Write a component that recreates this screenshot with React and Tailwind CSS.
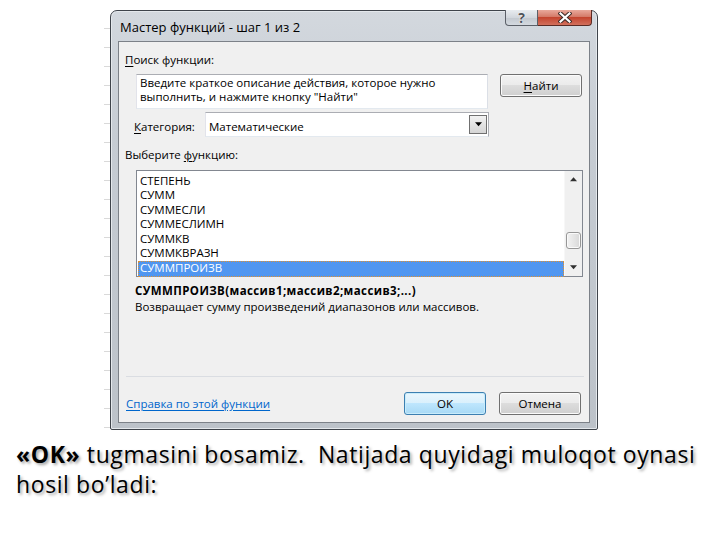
import React from 'react';

const FUNCS = ['СТЕПЕНЬ', 'СУММ', 'СУММЕСЛИ', 'СУММЕСЛИМН', 'СУММКВ', 'СУММКВРАЗН', 'СУММПРОИЗВ'];

function Arrow({ dir = 'down', size = 7, color = '#000' }) {
  return (
    <svg width={size} height={Math.ceil(size / 2) + 1} viewBox="0 0 8 5">
      {dir === 'down' ? <polygon points="0,0 8,0 4,4.5" fill={color} /> : <polygon points="0,4.5 8,4.5 4,0" fill={color} />}
    </svg>
  );
}

function WinButton({ children, focused, className = '' }) {
  return (
    <div
      className={`h-[23px] w-[82px] flex items-center justify-center rounded-[3px] border text-[11.5px] text-black ${
        focused
          ? 'border-[#3c7fb1] bg-[linear-gradient(#eaf6fd_0%,#d9f0fc_49%,#bee6fd_50%,#a7d9f5_100%)] shadow-[inset_0_0_0_1px_#c8ecfb]'
          : 'border-[#707070] bg-[linear-gradient(#f2f2f2_0%,#ebebeb_49%,#dddddd_50%,#cfcfcf_100%)] shadow-[inset_0_0_0_1px_#fbfbfb]'
      } ${className}`}
    >
      {children}
    </div>
  );
}

function Dialog() {
  return (
    <div className="w-[488px] h-[420px] flex flex-col border border-[#3f444b] rounded-t-[7px] rounded-b-[2px] bg-[linear-gradient(#d3d8de,#c6ccd3_30%,#bcc2c9)] px-[7px] pb-[6px] shadow-[inset_0_0_0_1px_#e4e8ec]">
      {/* title bar */}
      <div className="h-[30px] flex items-start">
        <span className="ml-[2px] mt-[7px] text-[13px] leading-[18px] text-black">Мастер функций - шаг 1 из 2</span>
        <div className="ml-auto -mt-[1px] -mr-[2px] flex">
          <div className="w-[33px] h-[16px] rounded-bl-[4px] border border-t-0 border-[#5b6068] bg-[linear-gradient(#e8ecf0,#d2d7dd_50%,#c2c8cf_51%,#d4d9df)] flex items-center justify-center">
            <span className="text-[14px] leading-[14px] font-bold text-[#4e545b] [text-shadow:0_0_1px_#fff,0_0_1px_#fff]">?</span>
          </div>
          <div className="w-[54px] h-[16px] rounded-br-[4px] border border-t-0 border-l-0 border-[#5b2b24] bg-[linear-gradient(#e9a99b,#d47a68_45%,#c4452f_50%,#d2705c)] flex items-center justify-center">
            <svg width="14" height="11" viewBox="0 0 14 11">
              <path d="M2.5 1.5 L11.5 9.5 M11.5 1.5 L2.5 9.5" stroke="#3d2b28" strokeWidth="4.2" strokeLinecap="square" />
              <path d="M2.5 1.5 L11.5 9.5 M11.5 1.5 L2.5 9.5" stroke="#ffffff" strokeWidth="2.2" strokeLinecap="square" />
            </svg>
          </div>
        </div>
      </div>

      {/* client area */}
      <div className="flex-1 flex flex-col border border-[#7c8188] bg-[#f0f0f0] text-[11.5px] text-black">
        <div className="mt-[10px] ml-[6px] h-[16px] leading-[16px]">
          <span className="underline underline-offset-2">П</span>оиск функции:
        </div>

        <div className="mt-[6px] flex items-start">
          <div className="ml-[17px] w-[352px] h-[35px] bg-white border border-[#abadb3] border-l-[#e2e3ea] border-b-[#e3e9ef] border-r-[#dbdfe6] pl-[3px] pt-[1px] leading-[13.5px]">
            Введите краткое описание действия, которое нужно<br />
            выполнить, и нажмите кнопку "Найти"
          </div>
          <WinButton className="ml-[12px]">
            <span><span className="underline underline-offset-2">Н</span>айти</span>
          </WinButton>
        </div>

        <div className="mt-[3px] flex items-center">
          <div className="ml-[15px] w-[71px] pt-[4px]">
            <span className="underline underline-offset-2">К</span>атегория:
          </div>
          <div className="w-[284px] h-[25px] bg-white border border-[#abadb3] border-l-[#e2e3ea] border-b-[#e3e9ef] flex items-center">
            <span className="pl-[3px] pt-[4px] flex-1">Математические</span>
            <div className="mr-[1px] w-[18px] h-[19px] border border-[#707070] bg-[linear-gradient(#f2f2f2,#e3e3e3_50%,#d5d5d5)] flex items-center justify-center">
              <Arrow />
            </div>
          </div>
        </div>

        <div className="mt-[10px] ml-[6px] h-[16px] leading-[16px]">
          Выберите <span className="underline underline-offset-2">ф</span>ункцию:
        </div>

        <div className="mt-[7px] ml-[17px] w-[447px] h-[107px] bg-white border border-[#828790] flex">
          <div className="flex-1 pt-[2.5px] pl-[1px]">
            {FUNCS.map((f, i) => {
              const sel = i === FUNCS.length - 1;
              return (
                <div
                  key={f}
                  className={`h-[14.6px] leading-[14.6px] pl-[2px] ${
                    sel ? 'bg-[#5096f0] text-white outline outline-1 outline-dotted outline-[#e0902f] -outline-offset-1 h-[16px]' : ''
                  }`}
                >
                  {f}
                </div>
              );
            })}
          </div>
          <div className="w-[18px] flex flex-col bg-[#f0f0f0] border-l border-[#f7f7f7]">
            <div className="h-[17px] flex items-center justify-center">
              <Arrow dir="up" size={7} color="#303030" />
            </div>
            <div className="h-[44px]" />
            <div className="mx-[1px] h-[17px] rounded-[3px] border border-[#979797] bg-[linear-gradient(90deg,#f2f2f2,#e6e6e6_50%,#d8d8d8)] shadow-[inset_0_0_0_1px_#fafafa]" />
            <div className="flex-1" />
            <div className="h-[17px] flex items-center justify-center">
              <Arrow size={7} color="#303030" />
            </div>
          </div>
        </div>

        <div className="mt-[6px] ml-[16px] h-[16px] leading-[16px] font-bold tracking-[0.4px]">
          СУММПРОИЗВ(массив1;массив2;массив3;...)
        </div>
        <div className="ml-[16px] h-[16px] leading-[16px]">
          Возвращает сумму произведений диапазонов или массивов.
        </div>

        <div className="mt-[61px] ml-[7px] w-[458px] h-px bg-[#dadde2]" />

        <div className="mt-[15px] flex items-center">
          <span className="ml-[7px] text-[#0066cc] underline underline-offset-2">Справка по этой функции</span>
          <WinButton focused className="ml-auto">OK</WinButton>
          <WinButton className="ml-[13px] mr-[8px]">Отмена</WinButton>
        </div>
      </div>
    </div>
  );
}

export default function App() {
  return (
    <div className="w-[720px] h-[540px] bg-white overflow-hidden font-['Open_Sans','Noto_Sans',sans-serif]">
      <div className="flex pt-[10px] pl-[104px]">
        <div className="w-[6px] h-[420px] bg-[repeating-linear-gradient(to_bottom,transparent_0,transparent_18px,#d9d9d9_18px,#d9d9d9_19px)]" />
        <Dialog />
      </div>
      <p className="mt-[9px] pl-[16px] font-['Open_Sans',sans-serif] text-[23px] leading-[30px] tracking-[0.6px] text-black [font-variant-ligatures:none] [text-shadow:2px_2px_3px_rgba(0,0,0,0.35)]">
        <b>«OK»</b> tugmasini bosamiz.{'\u00a0 '}Natijada quyidagi muloqot oynasi<br />
        hosil bo’ladi:
      </p>
    </div>
  );
}
